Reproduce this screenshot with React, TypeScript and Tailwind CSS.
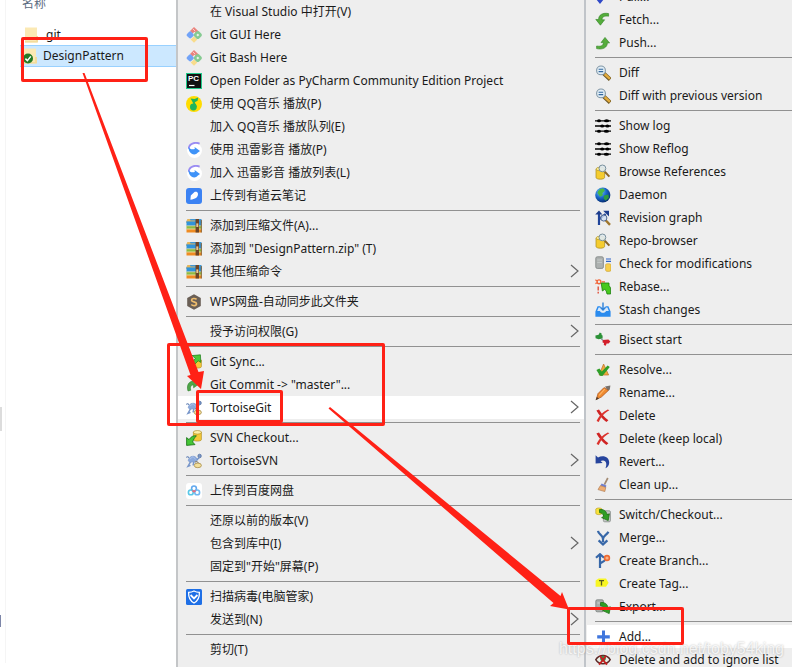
import type { ReactNode } from "react";

type IconProps = { children: ReactNode };

function Icon({ children }: IconProps) {
  return (
    <svg viewBox="0 0 16 16" className="size-4" aria-hidden>
      {children}
    </svg>
  );
}

const gitDiamond = (
  <Icon>
    <path d="M8 9.4 L11.4 12.6 L8 15.8 L4.6 12.6 Z" fill="#f8dc8c" />
    <path d="M4 4 L8 0 L13 4.8 L10.6 7 L8.4 4.8 L6.6 6.4 Z" fill="#ea837d" />
    <path d="M7 2 L9.2 4.2" stroke="#f8e6e4" strokeWidth="0.8" fill="none" />
    <rect x="1.2" y="4.9" width="6" height="6" rx="1.8" transform="rotate(45 4.2 7.9)" fill="#72a3f7" />
    <rect x="9.6" y="5.8" width="4.4" height="4.4" rx="0.8" transform="rotate(45 11.8 8)" fill="#eef3ee" stroke="#86cb92" strokeWidth="2.4" />
  </Icon>
);

const pycharm = (
  <Icon>
    <rect width="16" height="16" fill="#21c98a" />
    <rect x="1" y="1" width="14" height="14" fill="#111" />
    <text x="2" y="8.4" fontSize="8" fontWeight="700" fontFamily="Liberation Sans, sans-serif" fill="#fff">PC</text>
    <path d="M3 12.5 H8.5" stroke="#fff" strokeWidth="1.2" />
  </Icon>
);

const qqMusic = (
  <Icon>
    <circle cx="8" cy="8" r="8" fill="#ffdc00" />
    <circle cx="7.4" cy="11" r="3.4" fill="#1fb45c" />
    <path d="M4.6 2.4 L8.6 3 L12.2 1.4 L11.6 4.8 L8.8 6.2 L10.8 11 L8.6 10.5 L6.4 5.8 Z" fill="#1fb45c" />
  </Icon>
);

const thunder = (
  <Icon>
    <circle cx="8.5" cy="8.5" r="7.5" fill="#fff" />
    <path d="M13.6 1.6 C9 -0.4 2.6 1.8 2.8 6.8" stroke="#9a8cf2" strokeWidth="1.8" fill="none" />
    <path d="M2.6 5 C4 7.6 6.4 7.6 8.8 7 L8.6 5 L14 9 L11.6 10.8 C10 12.8 7.4 12.8 5.4 11.4 C3.4 10 2.4 7.6 2.6 5 Z" fill="#3f93f8" />
  </Icon>
);

const youdao = (
  <Icon>
    <rect width="16" height="16" rx="3" fill="#3b82f3" />
    <path d="M4.4 11.8 L4.8 7.6 L8.2 4.2 C9.4 3.4 12 3.6 12 6 C12 9.4 9 11.2 4.4 11.8 Z" fill="#fff" />
  </Icon>
);

const archive = (
  <Icon>
    <path d="M0.5 3 L3 1 H15.5 V5 H0.5 Z" fill="#3f97d5" />
    <path d="M0.5 3.2 L1.4 1 H4 L4.5 2.6 H9 V5 H0.5 Z" fill="#e5b65c" />
    <rect x="0.5" y="3.4" width="15" height="4.6" fill="#2f93da" />
    <rect x="0.5" y="8" width="15" height="3.2" fill="#8cba45" />
    <rect x="0.5" y="11.2" width="15" height="3.3" fill="#ef8b22" />
    <path d="M0.5 10.9 H15.5 M0.5 7.8 H15.5" stroke="#f5e3a8" strokeWidth="0.7" />
    <rect x="9.6" y="1" width="3.4" height="13.5" fill="#6d4526" />
    <rect x="10.3" y="5.4" width="2" height="3.6" fill="#e8c892" />
    <path d="M15.3 2 V14.5" stroke="#7c5525" strokeWidth="0.9" />
  </Icon>
);

const wps = (
  <Icon>
    <path d="M8 0.3 L14.8 4.1 V11.9 L8 15.7 L1.2 11.9 V4.1 Z" fill="#6a5f56" />
    <path d="M10.6 5.4 C9 4 5.6 4.2 5.6 6.2 C5.6 8.4 10.5 7.4 10.5 9.8 C10.5 12 7 12.2 5.3 10.5" stroke="#efbd6c" strokeWidth="1.7" fill="none" />
  </Icon>
);

const yellowDrum = (
  <>
    <path d="M7.4 2 V9.6 C7.4 11.6 15.4 11.6 15.4 9.6 V2 Z" fill="#f5c838" stroke="#a98718" strokeWidth="0.6" />
    <ellipse cx="11.4" cy="2.3" rx="4" ry="1.8" fill="#fdf0a8" stroke="#a98718" strokeWidth="0.6" />
  </>
);

const sync = (
  <Icon>
    <path d="M7.4 6 V12.6 C7.4 14.6 15.4 14.6 15.4 12.6 V6 Z" fill="#f5c838" stroke="#a98718" strokeWidth="0.6" />
    <path d="M6 1.6 L14.4 0.8 L14.8 8.4 L12.2 6.8 L8.5 10.5 L6 8.5 L9.4 4.4 Z" fill="#4bc93a" stroke="#1c7a18" strokeWidth="0.7" />
  </Icon>
);

const commit = (
  <Icon>
    <path d="M2 14 C0.2 8 3 4.2 7.6 4 L7.6 2 L13.5 6.5 L7.6 10.8 V8 C5 8 3.6 10 4.8 13.2 Z" fill="#4fa548" stroke="#2c7f29" strokeWidth="0.6" />
  </Icon>
);

const tortoise = (
  <Icon>
    <path d="M2.2 7.8 C2.6 3 9.4 1.2 11.4 6.6 L10.6 8.6 L4 9.2 Z" fill="#8ba9dc" stroke="#7f9dd0" strokeWidth="0.8" />
    <path d="M4 6 L7 3.6 L9.6 6.4" stroke="#b4caf0" strokeWidth="0.7" fill="none" />
    <path d="M0.4 4.6 C1 3.2 2.6 3.6 2.8 5" stroke="#6784b6" strokeWidth="1.1" fill="none" />
    <ellipse cx="13.6" cy="3" rx="1.7" ry="1.8" fill="#7c97c6" stroke="#48679c" strokeWidth="0.7" />
    <path d="M11 6.8 L13 4.8" stroke="#6f8fc6" strokeWidth="1.4" />
    <path d="M4.4 9 L2 13.4 L4.5 12.4 M8 8.6 L7 12.4" stroke="#7795c9" strokeWidth="1.5" fill="none" />
    <ellipse cx="11.8" cy="12.4" rx="3.6" ry="2.3" fill="#f3df9a" stroke="#a68c4c" strokeWidth="0.8" />
    <path d="M9 9.2 C10 8.2 12 8.6 12.4 10" stroke="#8b7a55" strokeWidth="1" fill="none" />
  </Icon>
);

const svnCheckout = (
  <Icon>
    {yellowDrum}
    <path d="M0.6 15.4 L0.6 7.6 L3 9.6 C5 6.6 7.4 5.4 10.4 5.8 C8.6 7.6 7.6 9.4 6.6 12 L9 14.6 Z" fill="#45c636" stroke="#146d12" strokeWidth="0.8" />
  </Icon>
);

const baiduDisk = (
  <Icon>
    <rect width="16" height="16" rx="3" fill="#fff" />
    <circle cx="8" cy="5.4" r="2.4" fill="none" stroke="#63a9ee" strokeWidth="1.6" />
    <circle cx="4.8" cy="9.4" r="2.4" fill="none" stroke="#59c8e8" strokeWidth="1.6" />
    <circle cx="11.2" cy="9.4" r="2.4" fill="none" stroke="#6fb8f2" strokeWidth="1.6" />
    <path d="M6.4 7.4 L8 8.8 L9.6 7.4" stroke="#ef6b7c" strokeWidth="1.5" fill="none" />
  </Icon>
);

const shield = (
  <Icon>
    <rect width="16" height="16" rx="1.5" fill="#1e6fe6" />
    <path d="M8 2 C9.8 3 11.6 3.3 13.4 3.3 C13.6 8.5 12 12 8 14 C4 12 2.4 8.5 2.6 3.3 C4.4 3.3 6.2 3 8 2 Z" fill="none" stroke="#fff" strokeWidth="1.3" />
    <path d="M4.6 6 L8 9.4 L11.4 6" stroke="#fff" strokeWidth="1.8" fill="none" />
  </Icon>
);

const pull = (
  <Icon>
    <path d="M3.6 4 H6.4 V10.5 H8.6 L5 15 L1.4 10.5 H3.6 Z" fill="#2f49c8" />
  </Icon>
);

const fetchIcon = (
  <Icon>
    <path d="M13.6 1.6 C8 0.4 3.6 2.6 3.6 7.6 L0.8 7.4 L5.4 13.2 L9.6 7.8 L7 7.8 C7 5 9 3.6 13.6 4.2 Z" fill="#55ad3c" stroke="#2f8124" strokeWidth="0.6" />
  </Icon>
);

const push = (
  <Icon>
    <path d="M1.6 13.6 C7.6 15 12.4 12.6 12.4 7.8 L14.6 8 L10 2.4 L6 7.6 L8.4 7.6 C8.4 10.4 6.4 11.8 1.6 11 Z" fill="#55ad3c" stroke="#2f8124" strokeWidth="0.6" />
  </Icon>
);

const magnifier = (
  <Icon>
    <path d="M8.8 8.6 L15.2 14.4" stroke="#6b5523" strokeWidth="4" />
    <path d="M9.6 9 L15 13.8" stroke="#e2ab3c" strokeWidth="2.4" />
    <circle cx="6" cy="5.4" r="4.4" fill="#e2eef6" stroke="#8197a6" strokeWidth="1.1" />
    <path d="M3.6 4.2 H8.2 M3.6 6.6 H8.2" stroke="#33689e" strokeWidth="1.1" />
  </Icon>
);

const log = (
  <Icon>
    <path d="M0 2.8 H16 M0 8 H16 M0 13.2 H16" stroke="#000" strokeWidth="1.3" />
    <ellipse cx="4" cy="2.8" rx="2" ry="1.5" />
    <ellipse cx="11.6" cy="2.8" rx="2.6" ry="1.5" />
    <ellipse cx="7.2" cy="8" rx="2" ry="1.6" />
    <ellipse cx="12.4" cy="8" rx="2" ry="1.6" />
    <ellipse cx="4" cy="13.2" rx="2" ry="1.5" />
    <ellipse cx="11.4" cy="13.2" rx="2.6" ry="1.5" />
  </Icon>
);

const browse = (
  <Icon>
    <path d="M1 5 V13.4 C1 15.8 9.6 15.8 9.6 13.4 V5 Z" fill="#f5cc2f" stroke="#a8891b" strokeWidth="0.7" />
    <ellipse cx="5.3" cy="5" rx="4.3" ry="1.8" fill="#fbe98b" stroke="#a8891b" strokeWidth="0.6" />
    <path d="M9.8 7.8 L14.4 12.6" stroke="#8a6524" strokeWidth="2" />
    <circle cx="7.4" cy="4.4" r="3.4" fill="#dfe9ee" fillOpacity="0.9" stroke="#79909c" strokeWidth="1" />
  </Icon>
);

const globe = (
  <Icon>
    <defs>
      <radialGradient id="globe" cx="0.35" cy="0.3" r="0.8">
        <stop offset="0" stopColor="#6fc4ff" />
        <stop offset="0.5" stopColor="#1763c6" />
        <stop offset="1" stopColor="#04205c" />
      </radialGradient>
    </defs>
    <circle cx="7.8" cy="8" r="7.6" fill="url(#globe)" />
    <path d="M2.4 5.8 C3.2 2.6 6 1.2 8.6 1.6 L9.8 3.8 L7.4 6 L7.8 8.2 L5 9.8 Z" fill="#49b845" />
    <path d="M9 8.4 L13.4 7.6 L13.8 11 L10.6 13.8 L8.6 11.6 Z" fill="#2d9b41" />
  </Icon>
);

const revision = (
  <Icon>
    <path d="M4 15 V3.4 M4 9.4 L10.6 4" stroke="#20449a" strokeWidth="2.2" fill="none" />
    <path d="M0.2 4.6 L4 0.6 L7.4 4.6 Z" fill="#1c3c8c" />
    <path d="M8.2 0.8 H14 V6.4 Z" fill="#1c3c8c" />
    <path d="M10.4 10 L15 14.8" stroke="#a0772e" strokeWidth="2.4" />
    <circle cx="8.8" cy="8" r="3.1" fill="#cfdff2" fillOpacity="0.8" stroke="#4e6690" strokeWidth="1" />
  </Icon>
);

const modifications = (
  <Icon>
    <rect x="0.8" y="0.8" width="7.6" height="11.6" rx="1.5" fill="#adb1b0" stroke="#858a89" strokeWidth="0.9" />
    <path d="M2.2 4 H7 M2.2 6.4 H7" stroke="#cbd0cf" strokeWidth="0.8" />
    <path d="M11 3 H16 M11 5.4 H16" stroke="#2d63c8" strokeWidth="1.2" />
    <path d="M10.6 8.6 V14.4 C10.6 15.8 16 15.8 16 14.4 V8.6 C16 7.4 10.6 7.4 10.6 8.6 Z" fill="#f8ce4c" stroke="#b8922b" strokeWidth="0.5" />
  </Icon>
);

const rebase = (
  <Icon>
    <circle cx="4" cy="2.8" r="1.9" fill="none" stroke="#f2663a" strokeWidth="1.4" />
    <path d="M0.4 0.8 L2 2 M0.4 4.6 L2 3.8 M7 2.8 H10" stroke="#f2663a" strokeWidth="1.2" />
    <path d="M3.2 7.6 V11.4 M3.2 12.8 V14.4" stroke="#e0503a" strokeWidth="1.4" />
    <path d="M6.2 4 H14 V6.4 L15.6 9 V15 H12 L11.2 11.8 L9.6 10.4 L7.4 12 Z" fill="#46c91e" stroke="#1c7f0e" strokeWidth="0.8" />
  </Icon>
);

const stash = (
  <Icon>
    <path d="M2.4 4.6 H13.6 L15 9.6 H1 Z" fill="#d5e8fb" />
    <path d="M0.4 9.6 L2.6 4.2 H5.4 V5.4 H3.6 L2.2 9 H5 C5.4 11.4 10.6 11.4 11 9 H13.8 L12.4 5.4 H10.6 V4.2 H13.4 L15.6 9.6 V14.8 H0.4 Z" fill="#2a8bee" />
    <path d="M8 0.6 V7.6 M5.4 5.2 L8 8 L10.6 5.2" stroke="#2d80d8" strokeWidth="1.4" fill="none" />
  </Icon>
);

const bisect = (
  <Icon>
    <path d="M0.4 3.4 L3.6 2.8 L4.8 0.6 L6.6 1.6 V3 L7.6 3.4 V6.4 L3.6 7.2 L0.6 6.2 Z" fill="#2c9137" />
    <path d="M7.6 8 L13.4 7.4 L15.4 9.6 L13.6 11.4 L11.6 11.6 L10.8 13.8 L8.8 13 L9 11 L7.6 10.4 Z" fill="#d3202b" />
    <path d="M6.2 6.8 L8 8.4" stroke="#7d8f94" strokeWidth="1.2" />
  </Icon>
);

const resolve = (
  <Icon>
    <path d="M8.6 2 L13.6 13 H4 Z" fill="#f1a93c" stroke="#b9702a" strokeWidth="0.7" />
    <path d="M1.4 8 L4.4 6.6 L6.8 9.6 L12.6 3.4 L14.8 5 L7.4 14 L5 13.8 Z" fill="#2f9e28" />
  </Icon>
);

const rename = (
  <Icon>
    <path d="M10 1.4 L15.4 0.4 L14.8 4.6 L12.8 6 Z" fill="#77716c" />
    <path d="M9 2.6 L13.4 5.4 L6.4 12 L1.2 14.6 L3 8.6 Z" fill="#ee8a30" stroke="#a8501b" strokeWidth="0.7" />
    <path d="M9.8 4 L4.2 10.4" stroke="#ffb566" strokeWidth="1.1" />
    <path d="M0.6 15.2 L1.8 12 L4 13.4 Z" fill="#4b3a2b" />
  </Icon>
);

const deleteX = (
  <Icon>
    <path d="M1.4 2.6 L4 1.6 C6.6 6 9.4 9.4 13.4 12.2 L11.4 14 C7.6 11.4 4.2 7.4 1.4 2.6 Z" fill="#cf2424" />
    <path d="M14.4 2.2 C9.6 4.6 5.6 9 3.8 14 L1.6 13 C3.8 8 8 3.6 12.8 1.4 Z" fill="#dc322d" />
  </Icon>
);

const revert = (
  <Icon>
    <path d="M0.6 1.2 L3 3.4 C8.6 0.4 14.6 3.4 14.2 9 C14 11.6 12.6 13.4 10.4 14.2 C12.2 10.6 11.4 6.6 8 6.4 C7 6.4 6.2 6.6 5.6 7 L7.6 9 L0.6 9.4 Z" fill="#26449d" />
  </Icon>
);

const broom = (
  <Icon>
    <path d="M12.8 1 L9.4 7.6" stroke="#a38a72" strokeWidth="1.7" />
    <path d="M6.6 6.6 L11.4 8.6 L10.8 10.6 L5.4 8.6 Z" fill="#6f7fd0" />
    <path d="M5.4 8.6 L10.8 10.4 L9.8 14.6 L3 12.6 Z" fill="#efae72" stroke="#a87248" strokeWidth="0.6" />
  </Icon>
);

const greenCurve = "M4.4 2.6 C8.8 1.8 11.6 4.4 12 7.6 L14.4 6.8 L13.2 13.6 L6.6 10.6 L8.8 9.4 C8.4 7.2 7 6 4.6 5.8 Z";

const switchIcon = (
  <Icon>
    <rect x="8.4" y="3.8" width="7" height="11" rx="1.2" fill="#c4c8c6" stroke="#858a87" strokeWidth="0.8" />
    <path d="M0.8 2 V6.6 C1.6 8 6 8 7 6.6 V2 C6 0.6 1.6 0.6 0.8 2 Z" fill="#f9e23c" stroke="#b59b1d" strokeWidth="0.6" />
    <path d={greenCurve} fill="#2f9e25" stroke="#17650f" strokeWidth="0.7" />
  </Icon>
);

const merge = (
  <Icon>
    <path d="M3 0.8 C3.4 4.8 8 4.6 8 9 M13.4 1.8 C12 5 8.2 5.4 8 9 V12" stroke="#3767a8" strokeWidth="2.2" fill="none" />
    <path d="M3.6 10.4 L8 14.4 L12.4 10.4" stroke="#3767a8" strokeWidth="2.2" fill="none" />
  </Icon>
);

const branch = (
  <Icon>
    <path d="M5 15 V2 M5 11 C5.6 8.8 9.6 9 10 6.6" stroke="#3767a8" strokeWidth="2.2" fill="none" />
    <path d="M1 4.8 L5 1.2 L9 4.8" stroke="#3767a8" strokeWidth="2.2" fill="none" />
    <circle cx="12" cy="5" r="2.4" fill="#f8b287" stroke="#ee6b33" strokeWidth="1.6" />
  </Icon>
);

const tag = (
  <Icon>
    <path d="M0.6 4.4 L3.6 2.6 H11 L13.6 6.8 L11 10.8 H0.6 Z" fill="#f8f623" />
    <path d="M4 4.6 H9 M6.5 4.6 V9.4" stroke="#565a20" strokeWidth="1.3" />
  </Icon>
);

const exportIcon = (
  <Icon>
    <rect x="0.8" y="0.8" width="7.6" height="12" rx="1.4" fill="#a9aeab" stroke="#7a807d" strokeWidth="0.8" />
    <path d="M2.4 4 H7" stroke="#d7dad8" strokeWidth="0.9" />
    <g transform="translate(1 1)">
      <path d={greenCurve} fill="#2f9e25" stroke="#17650f" strokeWidth="0.7" />
    </g>
  </Icon>
);

const add = (
  <Icon>
    <path d="M7 1.4 H10 V6.2 H14.8 V9.4 H10 V14.2 H7 V9.4 H2.2 V6.2 H7 Z" fill="#3f76dd" />
  </Icon>
);

const ignore = (
  <Icon>
    <path d="M0.8 7.6 C4 2 12 2 15.2 7.6 C12 13.2 4 13.2 0.8 7.6 Z" fill="#e9efe6" stroke="#5c2a28" strokeWidth="1.5" />
    <circle cx="8" cy="6.6" r="2.8" fill="#3f8b4c" />
    <path d="M4 12.6 L8 8 L12 12.6 M5 3.8 L8 8 L11 3.8" stroke="#c81d20" strokeWidth="1.8" fill="none" />
  </Icon>
);

type Item = {
  label: string;
  icon?: ReactNode;
  sub?: boolean;
  active?: boolean;
};

const contextGroups: Item[][] = [
  [
    { label: "在 Visual Studio 中打开(V)" },
    { label: "Git GUI Here", icon: gitDiamond },
    { label: "Git Bash Here", icon: gitDiamond },
    { label: "Open Folder as PyCharm Community Edition Project", icon: pycharm },
    { label: "使用 QQ音乐 播放(P)", icon: qqMusic },
    { label: "加入 QQ音乐 播放队列(E)" },
    { label: "使用 迅雷影音 播放(P)", icon: thunder },
    { label: "加入 迅雷影音 播放列表(L)", icon: thunder },
    { label: "上传到有道云笔记", icon: youdao },
  ],
  [
    { label: "添加到压缩文件(A)...", icon: archive },
    { label: '添加到 "DesignPattern.zip" (T)', icon: archive },
    { label: "其他压缩命令", icon: archive, sub: true },
  ],
  [{ label: "WPS网盘-自动同步此文件夹", icon: wps }],
  [{ label: "授予访问权限(G)", sub: true }],
  [
    { label: "Git Sync...", icon: sync },
    { label: 'Git Commit -> "master"...', icon: commit },
    { label: "TortoiseGit", icon: tortoise, sub: true, active: true },
  ],
  [
    { label: "SVN Checkout...", icon: svnCheckout },
    { label: "TortoiseSVN", icon: tortoise, sub: true },
  ],
  [{ label: "上传到百度网盘", icon: baiduDisk }],
  [
    { label: "还原以前的版本(V)" },
    { label: "包含到库中(I)", sub: true },
    { label: "固定到\"开始\"屏幕(P)" },
  ],
  [
    { label: "扫描病毒(电脑管家)", icon: shield },
    { label: "发送到(N)", sub: true },
  ],
  [{ label: "剪切(T)" }],
];

const gitGroups: Item[][] = [
  [
    { label: "Pull...", icon: pull },
    { label: "Fetch...", icon: fetchIcon },
    { label: "Push...", icon: push },
  ],
  [
    { label: "Diff", icon: magnifier },
    { label: "Diff with previous version", icon: magnifier },
  ],
  [
    { label: "Show log", icon: log },
    { label: "Show Reflog", icon: log },
    { label: "Browse References", icon: browse },
    { label: "Daemon", icon: globe },
    { label: "Revision graph", icon: revision },
    { label: "Repo-browser", icon: browse },
    { label: "Check for modifications", icon: modifications },
    { label: "Rebase...", icon: rebase },
    { label: "Stash changes", icon: stash },
  ],
  [{ label: "Bisect start", icon: bisect }],
  [
    { label: "Resolve...", icon: resolve },
    { label: "Rename...", icon: rename },
    { label: "Delete", icon: deleteX },
    { label: "Delete (keep local)", icon: deleteX },
    { label: "Revert...", icon: revert },
    { label: "Clean up...", icon: broom },
  ],
  [
    { label: "Switch/Checkout...", icon: switchIcon },
    { label: "Merge...", icon: merge },
    { label: "Create Branch...", icon: branch },
    { label: "Create Tag...", icon: tag },
    { label: "Export...", icon: exportIcon },
  ],
  [
    { label: "Add...", icon: add, active: true },
    { label: "Delete and add to ignore list", icon: ignore },
  ],
];

function MenuItem({ label, icon, sub, active }: Item) {
  return (
    <button
      type="button"
      role="menuitem"
      className={`flex h-[23px] w-full items-center pl-2 text-left whitespace-nowrap ${active ? "bg-white" : ""}`}
    >
      <span className="mr-2 size-4 shrink-0">{icon}</span>
      <span className="flex-1">{label}</span>
      {sub && (
        <svg viewBox="0 0 16 16" className="mr-0.5 size-4 shrink-0" fill="none" stroke="#666" strokeWidth="1.2" aria-hidden>
          <path d="M5 1 L12 7 L5 13" />
        </svg>
      )}
    </button>
  );
}

function Menu({ groups, inset }: { groups: Item[][]; inset?: boolean }) {
  return (
    <div role="menu">
      {groups.map((group, i) => (
        <div key={i}>
          {i > 0 && (
            <div className={`flex h-[7px] items-center pl-2 ${inset ? "pr-1" : ""}`}>
              <div className="h-px w-full bg-[#919191]" />
            </div>
          )}
          {group.map((item) => (
            <MenuItem key={item.label} {...item} />
          ))}
        </div>
      ))}
    </div>
  );
}

function Folder({ children }: { children?: ReactNode }) {
  return (
    <svg viewBox="0 0 16 16" className="size-4 shrink-0" aria-hidden>
      <path d="M1 0.5 H13 V15.5 H1 Z" fill="#fbe9b4" />
      <path d="M12 9 H14 V15.5 H1 V14 H12 Z" fill="#f3dc9c" />
      {children}
    </svg>
  );
}

export default function App() {
  return (
    <div className="relative flex h-screen overflow-hidden bg-white font-['Noto_Sans','Noto_Sans_CJK_SC',sans-serif] text-[12px] leading-4 text-[#1a1a1a]">
      <aside className="w-44 shrink-0 pl-[5px]">
        <div className="h-full border-l border-[#f5f5f5] pl-[14px]">
          <p className="-mt-1 pl-[2px] text-[#5a6a80]">名称</p>
          <div className="mt-[12px]">
            <button type="button" className="flex h-[21px] w-full items-center gap-1.5 pl-1">
              <Folder />
              git
            </button>
            <button type="button" className="flex h-[22px] w-full items-center gap-1 border-y border-[#99d1ff] bg-[#cce8ff] pl-[3px]">
              <Folder>
                <circle cx="5" cy="10.5" r="5" fill="#237a26" />
                <path d="M2.4 10.6 L4.4 12.6 L7.8 8.4" stroke="#fff" strokeWidth="1.5" fill="none" />
              </Folder>
              DesignPattern
            </button>
          </div>
        </div>
      </aside>

      <section className="w-[408px] shrink-0 border-l-2 border-[#c4c6c8] bg-[#eeeeee]">
        <Menu groups={contextGroups} inset />
      </section>

      <section className="min-w-0 flex-1 border-l-2 border-[#c0c4c9] bg-[#eeeeee] pl-px">
        <div className="-mt-[15px]">
          <Menu groups={gitGroups} />
        </div>
      </section>

      {/* edge of the window behind */}
      <div className="absolute top-[407px] left-0 h-6 w-0.5 bg-[#dcdcdc]" />
      <div className="absolute top-[615px] left-0 h-3 w-px bg-[#7d86a8]" />

      {/* watermark */}
      <p className="pointer-events-none absolute right-2 bottom-2 font-['Liberation_Sans',sans-serif] text-[16px] leading-5 whitespace-nowrap text-white/80 [text-shadow:0_0_2px_rgba(0,0,0,0.3)]">
        https://blog.csdn.net/toby54king
      </p>

      {/* red call-outs drawn over the menus */}
      <div className="pointer-events-none absolute top-[37px] left-[21px] h-[45px] w-[127px] rounded-xs border-3 border-[#ff2116]" />
      <div className="pointer-events-none absolute top-[343px] left-[167px] h-[83px] w-[218px] rounded-xs border-3 border-[#ff2116]" />
      <div className="pointer-events-none absolute top-[390px] left-[196px] h-[33px] w-[87px] rounded-xs border-3 border-[#ff2116]" />
      <div className="pointer-events-none absolute top-[607px] left-[567px] h-[38px] w-[117px] rounded-xs border-3 border-[#ff2116]" />
      <svg className="pointer-events-none absolute top-0 left-0" width="792" height="667" fill="#ff2116" aria-hidden>
        <path d="M82.5 73 L84.5 73 L198.5 372 L204 371 L201 389 L187 376 L190.5 375 Z" />
        <path d="M328.5 408.5 L330 407 L560.5 596 L562 592 L569 609.5 L550 606 L553.5 603 Z" />
      </svg>
    </div>
  );
}
